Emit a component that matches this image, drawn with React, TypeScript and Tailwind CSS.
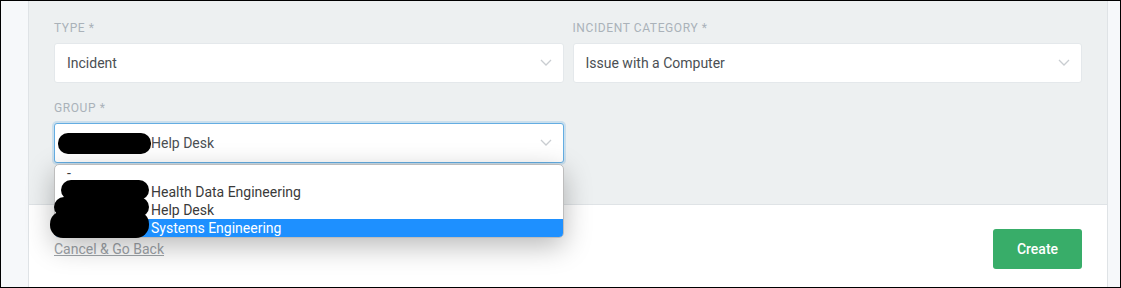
import React from "react";

function Chevron() {
  return (
    <svg width="12" height="8" viewBox="0 0 12 8" className="shrink-0">
      <polyline points="1,1 6,6 11,1" fill="none" stroke="#c9cdd1" strokeWidth="1.3" />
    </svg>
  );
}

function Field({ label, children }: { label: string; children: React.ReactNode }) {
  return (
    <div className="flex flex-col">
      <label className="h-[16px] leading-[16px] mb-[7px] text-[12px] tracking-[0.6px] uppercase text-[#aab2b9]">
        {label}
      </label>
      {children}
    </div>
  );
}

function Select({ value }: { value: string }) {
  return (
    <div className="h-[40px] flex items-center justify-between rounded-[3px] bg-white border border-[#e4e8eb] pl-[12px] pr-[11px] text-[14px] text-[#4b4f53]">
      <span>{value}</span>
      <Chevron />
    </div>
  );
}

const options = ["Health Data Engineering", "Help Desk", "Systems Engineering"];

export default function App() {
  return (
    <div className="w-[1121px] h-[288px] border border-black flex bg-[#f6f8fa] font-['Roboto',sans-serif] overflow-hidden">
      <div className="w-[27px] shrink-0" />
      <div className="flex-1 flex flex-col border-x border-[#dfe3e6] bg-white">
        {/* gray form area */}
        <div className="h-[204px] shrink-0 bg-[#edf0f1] border-b border-[#dfe3e6] px-[25px] pt-[19px]">
          <div className="grid grid-cols-2 gap-x-[9px]">
            <Field label="Type *">
              <Select value="Incident" />
            </Field>
            <Field label="Incident Category *">
              <Select value="Issue with a Computer" />
            </Field>
          </div>
          <div className="grid grid-cols-2 gap-x-[9px] mt-[17px]">
            <Field label="Group *">
              <div className="relative">
                <div className="h-[40px] flex items-center justify-between rounded-[3px] bg-white border border-[#64ade2] shadow-[0_0_0_2px_rgba(100,173,226,0.25)] pl-[3px] pr-[11px] text-[14px] text-[#4b4f53]">
                  <span className="flex items-center">
                    <span className="inline-block w-[93px] h-[21px] rounded-[10px] bg-black" />
                    Help Desk
                  </span>
                  <Chevron />
                </div>
                {/* open native dropdown */}
                <div className="absolute left-0 right-0 top-[41px] z-10 rounded-[5px] border border-[#bdbdbd] bg-white overflow-hidden shadow-[0_8px_28px_rgba(0,0,0,0.28)] text-[14px] text-[#3a3a3a]">
                  <div className="h-[18px] leading-[16px] pl-[12px]">-</div>
                  {options.map((o) => (
                    <div
                      key={o}
                      className={
                        o === "Systems Engineering"
                          ? "h-[18px] leading-[18px] pl-[96px] bg-[#1e90ff] text-white"
                          : "h-[18px] leading-[18px] pl-[96px]"
                      }
                    >
                      {o}
                    </div>
                  ))}
                </div>
                {/* redaction scribbles */}
                <svg className="absolute left-[-6px] top-[41px] z-20" width="102" height="76" viewBox="0 0 102 76">
                  <rect x="13" y="16" width="88" height="20" rx="10" fill="#000" />
                  <rect x="6" y="33" width="95" height="20" rx="10" fill="#000" />
                  <rect x="2" y="47" width="99" height="27" rx="13" fill="#000" />
                </svg>
              </div>
            </Field>
            <div />
          </div>
        </div>
        {/* footer */}
        <div className="flex-1 flex items-start justify-between px-[25px] pt-[24px]">
          <a className="mt-[10px] text-[14px] leading-[20px] text-[#9da3a8] underline">Cancel &amp; Go Back</a>
          <button className="w-[89px] h-[40px] rounded-[3px] bg-[#38ad69] text-white text-[14px] font-medium">
            Create
          </button>
        </div>
      </div>
      <div className="w-[12px] shrink-0" />
    </div>
  );
}
